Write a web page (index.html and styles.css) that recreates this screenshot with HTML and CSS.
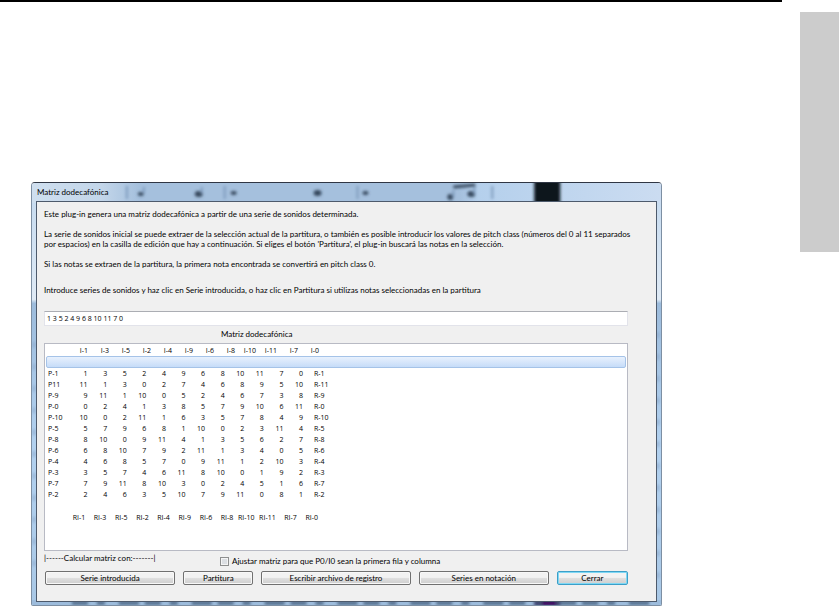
FILE: index.html
```
<!DOCTYPE html>
<html lang="es">
<head>
  <meta charset="utf-8">
  <title>Matriz dodecafónica</title>
  <link rel="stylesheet" href="styles.css">
</head>
<body>
  <main class="page">
    <section class="dialog" aria-labelledby="title">
      <svg class="glass" viewBox="0 0 630 425" preserveAspectRatio="none" aria-hidden="true">
        <defs>
          <filter id="soft" x="-5%" y="-5%" width="110%" height="110%"><feGaussianBlur stdDeviation="1.5"/></filter>
          <linearGradient id="sky">
            <stop offset="0" stop-color="#cfdfef"/>
            <stop offset=".11" stop-color="#c3d6ea"/>
            <stop offset=".17" stop-color="#a5c0dd"/>
            <stop offset=".68" stop-color="#a5c0dd"/>
            <stop offset=".71" stop-color="#b5d0ec"/>
            <stop offset="1" stop-color="#cbdcf1"/>
          </linearGradient>
          <linearGradient id="side" x2="0" y2="1">
            <stop offset="0" stop-color="#c8dcf0"/>
            <stop offset=".24" stop-color="#dfeaf5"/>
            <stop offset=".25" stop-color="#9dbcdc"/>
            <stop offset=".6" stop-color="#b2d1ef"/>
            <stop offset="1" stop-color="#a9c8e6"/>
          </linearGradient>
        </defs>
        <rect width="630" height="425" fill="url(#sky)"/>
        <rect y="20" width="6" height="405" fill="url(#side)"/>
        <rect x="624" y="20" width="6" height="405" fill="url(#side)"/>
        <rect y="420" width="630" height="5" fill="#9dbcdc"/>
        <g filter="url(#soft)">
          <rect x="503" y="-4" width="26" height="30" fill="#10161e"/>
          <rect x="503" y="420" width="26" height="6" fill="#3c1060"/>
          <g fill="#34465c">
            <ellipse cx="109" cy="11" rx="3" ry="2"/>
            <ellipse cx="167" cy="11" rx="4" ry="3"/>
            <ellipse cx="202" cy="10" rx="3" ry="2"/>
            <ellipse cx="286" cy="10" rx="4" ry="3"/>
            <ellipse cx="334" cy="10" rx="3" ry="2"/>
            <ellipse cx="419" cy="14" rx="3" ry="3"/>
            <ellipse cx="440" cy="11" rx="4" ry="3"/>
          </g>
          <path d="M95 3V16M193 3V16M326 3V16M461 3V16M112 10V4M170 10V4M422 14V7M443 11V3" fill="none" stroke="#7e9bbd" stroke-width="2"/>
          <path d="M422 4L444 2" stroke="#34465c" stroke-width="3"/>
          <path d="M40 423H620" fill="none" stroke="#405a78" stroke-width="3" stroke-dasharray="16 9 8 14 20 6"/>
          <path d="M2 160V400M627 150V400" fill="none" stroke="#8ba8ca" stroke-width="2" stroke-dasharray="6 16"/>
        </g>
      </svg>
      <h1 class="title" id="title">Matriz dodecafónica</h1>
      <div class="content">
        <p class="text">Este plug-in genera una matriz dodecafónica a partir de una serie de sonidos determinada.</p>
        <p class="text">La serie de sonidos inicial se puede extraer de la selección actual de la partitura, o también es posible introducir los valores de pitch class (números del 0 al 11 separados<br>por espacios) en la casilla de edición que hay a continuación. Si eliges el botón 'Partitura', el plug-in buscará las notas en la selección.</p>
        <p class="text">Si las notas se extraen de la partitura, la primera nota encontrada se convertirá en pitch class 0.</p>
        <label class="prompt" for="series">Introduce series de sonidos y haz clic en Serie introducida, o haz clic en Partitura si utilizas notas seleccionadas en la partitura</label>
        <input class="series" type="text" id="series" value="1 3 5 2 4 9 6 8 10 11 7 0">
        <h2 class="heading">Matriz dodecafónica</h2>
        <div class="list">
          <table class="matrix">
            <thead id="head"></thead>
            <tbody id="rows"></tbody>
            <tfoot id="foot"></tfoot>
          </table>
        </div>
        <div class="options">
          <span class="calc">|------Calcular matriz con:-------|</span>
          <input class="check" type="checkbox" id="adjust">
          <label for="adjust">Ajustar matriz para que P0/I0 sean la primera fila y columna</label>
        </div>
        <div class="buttons">
          <button type="button">Serie introducida</button>
          <button type="button">Partitura</button>
          <button type="button">Escribir archivo de registro</button>
          <button type="button">Series en notación</button>
          <button type="button" class="default">Cerrar</button>
        </div>
      </div>
    </section>
  </main>
  <aside class="tab"></aside>

  <script>
    const series = [1, 3, 5, 2, 4, 9, 6, 8, 10, 11, 7, 0];
    const matrix = [
      ['P-1', '1 3 5 2 4 9 6 8 10 11 7 0', 'R-1'],
      ['P11', '11 1 3 0 2 7 4 6 8 9 5 10', 'R-11'],
      ['P-9', '9 11 1 10 0 5 2 4 6 7 3 8', 'R-9'],
      ['P-0', '0 2 4 1 3 8 5 7 9 10 6 11', 'R-0'],
      ['P-10', '10 0 2 11 1 6 3 5 7 8 4 9', 'R-10'],
      ['P-5', '5 7 9 6 8 1 10 0 2 3 11 4', 'R-5'],
      ['P-8', '8 10 0 9 11 4 1 3 5 6 2 7', 'R-8'],
      ['P-6', '6 8 10 7 9 2 11 1 3 4 0 5', 'R-6'],
      ['P-4', '4 6 8 5 7 0 9 11 1 2 10 3', 'R-4'],
      ['P-3', '3 5 7 4 6 11 8 10 0 1 9 2', 'R-3'],
      ['P-7', '7 9 11 8 10 3 0 2 4 5 1 6', 'R-7'],
      ['P-2', '2 4 6 3 5 10 7 9 11 0 8 1', 'R-2']
    ];

    function labelRow(prefix) {
      return '<tr><td></td>' + series.map(n => `<th>${prefix}-${n}</th>`).join('') + '</tr>';
    }

    document.getElementById('head').innerHTML = labelRow('I');
    document.getElementById('foot').innerHTML = labelRow('RI');
    document.getElementById('rows').innerHTML = '<tr class="selected"><td></td></tr>' +
      matrix.map(([p, values, r]) => {
        const cells = values.split(' ').map(v => `<td>${v}</td>`).join('');
        return `<tr><th>${p}</th>${cells}<th>${r}</th></tr>`;
      }).join('');
  </script>
</body>
</html>
```
FILE: styles.css
```
* {
  box-sizing: border-box;
}
body {
  display: grid;
  grid-template-columns: 1fr 39px;
  column-gap: 18px;
  margin: 0;
  background: #fff;
  color: #000;
  font-family: Lato, "Open Sans", sans-serif;
  font-size: 8px;
  line-height: 10px;
}
.page {
  min-width: 0;
  padding: 180px 120px 0 31px;
  border-top: 2px solid #000;
}
.tab {
  height: 240px;
  margin-top: 12px;
  background: #ccc;
}
.dialog {
  position: relative;
  padding: 0 4px 3px;
  border: 1px solid #7d8fa3;
  border-top-color: #2f3644;
  border-radius: 4px 4px 2px 2px;
  overflow: hidden;
}
.glass {
  position: absolute;
  inset: 0;
  width: 100%;
  height: 100%;
}
.title {
  position: relative;
  margin: 0;
  padding-left: 1px;
  font-size: 8px;
  font-weight: normal;
  line-height: 18px;
}
.content {
  position: relative;
  padding: 7px 28px 16px 7px;
  border: 1px solid #4d5a6c;
  background: #f0f0f0;
}
.text {
  margin: 0 0 10px;
  white-space: nowrap;
}
.prompt {
  display: block;
  margin-top: 16px;
}
.series,
.matrix {
  font-family: "Open Sans", "Noto Sans", sans-serif;
  font-size: 7px;
}
.series {
  display: block;
  width: 100%;
  height: 15px;
  margin-top: 16px;
  padding: 0 2px;
  border: 1px solid #e2e3ea;
  border-top-color: #abadb3;
}
.heading {
  margin: 3px 0 4px;
  padding-left: 177px;
  font-size: 8px;
  font-weight: normal;
  line-height: 10px;
}
.list {
  height: 208px;
  padding: 1px;
  border: 1px solid #b8bac4;
  background: #fff;
}
.matrix,
.matrix thead,
.matrix tbody,
.matrix tfoot {
  display: block;
}
.matrix tr {
  display: grid;
  width: 285px;
  height: 11px;
  padding-left: 2px;
  line-height: 11px;
}
.matrix th,
.matrix td {
  padding: 0;
  font-weight: normal;
  text-align: right;
  white-space: nowrap;
}
.matrix thead tr {
  grid-template-columns: 19px repeat(12, minmax(0, 1fr));
  padding-right: 12px;
}
.matrix tbody tr {
  grid-template-columns: 20px repeat(12, minmax(0, 1fr)) 28px;
}
.matrix tfoot tr {
  grid-template-columns: 16px repeat(12, minmax(0, 1fr));
  margin-top: 12px;
  padding-right: 13px;
}
.matrix tbody th {
  text-align: left;
}
.matrix tbody th:last-child {
  padding-left: 11px;
}
.matrix tbody .selected {
  width: 100%;
  height: 12px;
  border: 1px solid #a5c3e8;
  border-radius: 2px;
  background: linear-gradient(#e8f1fd, #c6dcf8);
}
.options {
  display: flex;
  align-items: center;
  height: 20px;
}
.calc {
  align-self: flex-start;
  width: 176px;
  line-height: 14px;
}
.check {
  appearance: none;
  width: 9px;
  height: 9px;
  margin: 0 3px 0 0;
  border: 1px solid #8e8f8f;
  background: #dcdfe3;
  box-shadow: inset 0 0 0 1px #f4f4f4;
}
.buttons {
  display: grid;
  grid-template-columns: 130fr 70fr 149fr 130fr 71fr;
  column-gap: 8px;
  padding-left: 1px;
}
button {
  height: 14px;
  padding: 0;
  border: 1px solid #707070;
  border-radius: 2px;
  background: linear-gradient(#f2f2f2 45%, #dddddd 55%, #cfcfcf);
  box-shadow: inset 0 0 0 1px #f8f8f8;
  color: #000;
  font: inherit;
  line-height: 10px;
}
.default {
  border-color: #3c9fc8;
  box-shadow: inset 0 0 0 1px #7fd8f5;
}
```
